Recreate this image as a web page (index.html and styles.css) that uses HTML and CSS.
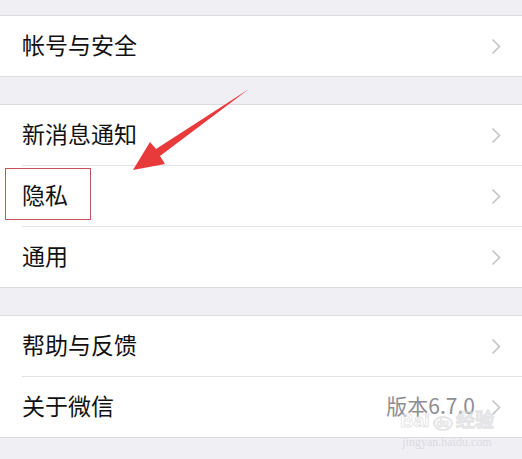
FILE: index.html
```html
<!DOCTYPE html>
<html lang="zh-CN">
<head>
  <meta charset="UTF-8" />
  <meta name="viewport" content="width=device-width, initial-scale=1.0">
  <title>设置</title>
  <link rel="stylesheet" href="styles.css">
</head>
<body>
  <div class="settings">
    <!-- Account -->
    <div class="group">
      <div class="row">
        <span class="label">帐号与安全</span>
        <svg class="chevron" width="10" height="17" viewBox="0 0 10 17"><path d="M1.5 1.5L8.5 8.5L1.5 15.5" fill="none" stroke="#c4c4c9" stroke-width="1.6"/></svg>
      </div>
    </div>

    <!-- Notifications / privacy / general -->
    <div class="group">
      <div class="row">
        <span class="label">新消息通知</span>
        <svg class="chevron" width="10" height="17" viewBox="0 0 10 17"><path d="M1.5 1.5L8.5 8.5L1.5 15.5" fill="none" stroke="#c4c4c9" stroke-width="1.6"/></svg>
      </div>
      <div class="row">
        <span class="label highlight">隐私</span>
        <svg class="chevron" width="10" height="17" viewBox="0 0 10 17"><path d="M1.5 1.5L8.5 8.5L1.5 15.5" fill="none" stroke="#c4c4c9" stroke-width="1.6"/></svg>
      </div>
      <div class="row">
        <span class="label">通用</span>
        <svg class="chevron" width="10" height="17" viewBox="0 0 10 17"><path d="M1.5 1.5L8.5 8.5L1.5 15.5" fill="none" stroke="#c4c4c9" stroke-width="1.6"/></svg>
      </div>
    </div>

    <!-- Help / about -->
    <div class="group">
      <div class="row">
        <span class="label">帮助与反馈</span>
        <svg class="chevron" width="10" height="17" viewBox="0 0 10 17"><path d="M1.5 1.5L8.5 8.5L1.5 15.5" fill="none" stroke="#c4c4c9" stroke-width="1.6"/></svg>
      </div>
      <div class="row">
        <span class="label">关于微信</span>
        <span class="value">版本6.7.0</span>
        <svg class="chevron" width="10" height="17" viewBox="0 0 10 17"><path d="M1.5 1.5L8.5 8.5L1.5 15.5" fill="none" stroke="#c4c4c9" stroke-width="1.6"/></svg>
      </div>
    </div>
  </div>

  <!-- annotation arrow drawn over the list -->
  <svg class="arrow" width="522" height="459" viewBox="0 0 522 459">
    <polygon points="133,170 150,142 156,149 249,89 160,156 165,164" fill="#e8393b"/>
  </svg>

  <!-- faint watermark -->
  <div class="watermark">
    <div class="wm-brand">Bai<span class="wm-paw">du</span>经验</div>
    <div class="wm-url">jingyan.baidu.com</div>
  </div>
</body>
</html>
```

FILE: styles.css
```css
* {
  margin: 0;
  padding: 0;
  box-sizing: border-box;
}
body {
  background-color: #efeff4;
  font-family: "Noto Sans CJK SC", "Noto Sans", sans-serif;
  width: 522px;
  height: 459px;
  overflow: hidden;
  position: relative;
}
.settings {
  padding-top: 15px;
}
/* Grouped list */
.group {
  background-color: #fff;
  border-top: 1px solid #dcdce0;
  border-bottom: 1px solid #dcdce0;
  margin-bottom: 27px;
}
.row {
  height: 60px;
  display: flex;
  align-items: center;
  padding-left: 22px;
  padding-right: 21px;
  padding-bottom: 3px;
  position: relative;
}
.row + .row {
  height: 61px;
  border-top: 1px solid #e3e3e6;
}
.row + .row::before {
  content: "";
  position: absolute;
  left: 0;
  top: -1px;
  width: 22px;
  height: 1px;
  background-color: #fff;
}
.label {
  flex: 1;
  font-size: 23px;
  color: #111;
  line-height: 1;
}
.highlight {
  position: relative;
}
.highlight::after {
  content: "";
  position: absolute;
  left: -17px;
  top: -15px;
  width: 84px;
  height: 50px;
  border: 1px solid #c3555a;
}
.value {
  font-size: 21px;
  color: #8e8e93;
  margin-right: 16px;
  line-height: 1;
}
.chevron {
  display: block;
  margin-top: 3px;
}
.arrow {
  position: absolute;
  left: 0;
  top: 0;
  pointer-events: none;
}
/* Watermark */
.watermark {
  position: absolute;
  left: 400px;
  top: 411px;
  white-space: nowrap;
  text-align: center;
  color: rgba(255, 255, 255, 0.5);
  -webkit-text-stroke: 1px rgba(165, 165, 170, 0.3);
}
.wm-brand {
  font-family: "Liberation Sans", sans-serif;
  font-size: 19px;
  font-weight: 700;
  line-height: 1;
}
.wm-paw {
  font-size: 10px;
  margin: 0 3px;
  padding: 0 2px;
  border: 2px solid rgba(165, 165, 170, 0.3);
  border-radius: 50%;
}
.wm-url {
  font-family: "Liberation Serif", serif;
  font-size: 12px;
  line-height: 1;
  margin-top: 6px;
  -webkit-text-stroke: 0;
  color: rgba(165, 165, 170, 0.3);
}
```
